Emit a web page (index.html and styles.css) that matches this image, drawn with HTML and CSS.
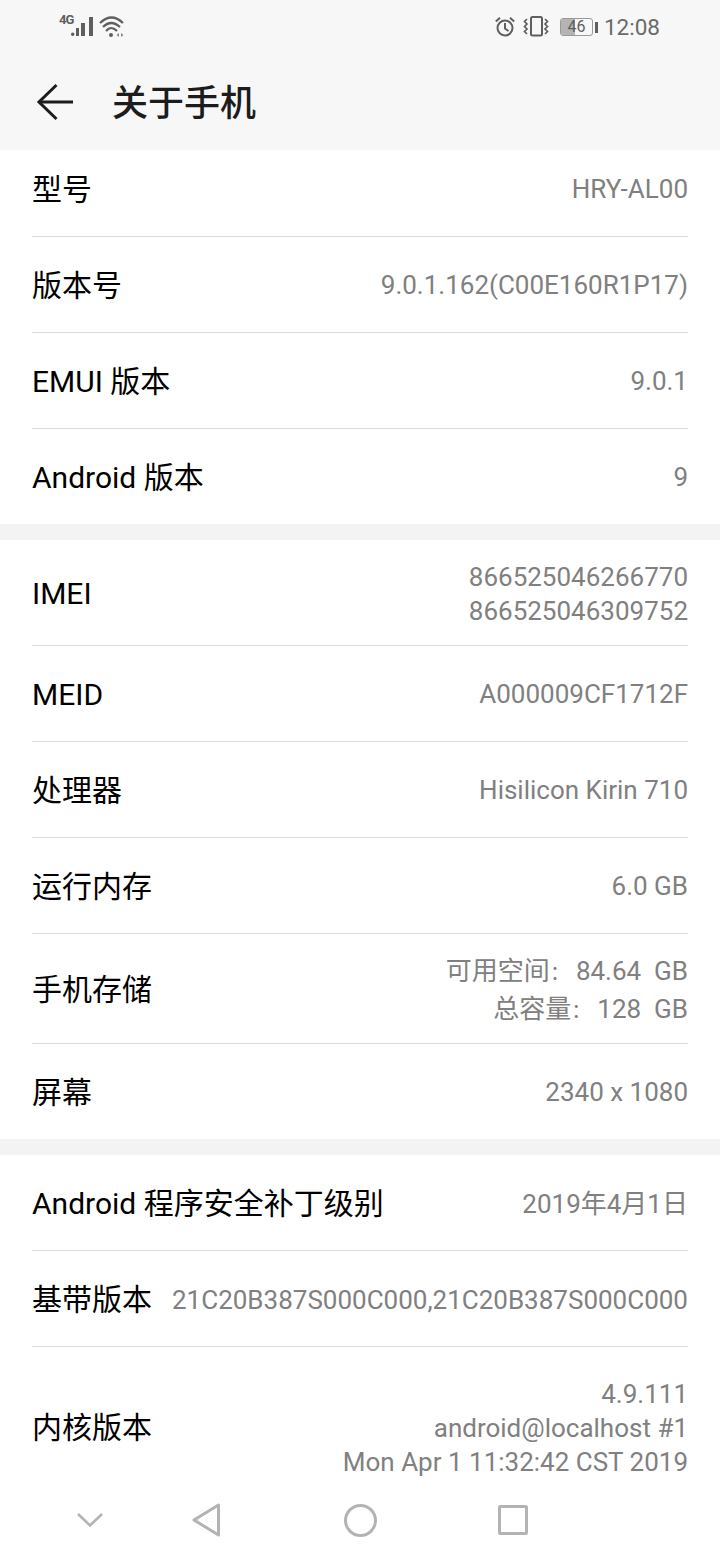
FILE: index.html
```html
<!DOCTYPE html>
<html lang="zh">
<head>
<meta charset="UTF-8">
<title>关于手机</title>
<link rel="stylesheet" href="styles.css">
</head>
<body>
<div class="phone">
  <div class="statusbar">
    <div class="status-left">
      <span class="net">4G</span>
      <svg class="ic-signal" width="22" height="24" viewBox="0 0 22 24" fill="#5f5f5f">
        <circle cx="1.700" cy="19.300" r="1.700"/>
        <rect x="5" y="13" width="3" height="8"/>
        <rect x="10" y="8" width="4" height="13"/>
        <rect x="18" y="2" width="4" height="19"/>
      </svg>
      <svg class="ic-wifi" width="26" height="24" viewBox="0 0 26 24" fill="none" stroke="#5f5f5f" stroke-width="2.200">
        <path d="M1 8Q12.500 -3 24 8"/>
        <path d="M4 12Q12 4 21 12"/>
        <path d="M7 16Q12 10 18 16"/>
        <circle cx="12" cy="20" r="2" fill="#5f5f5f" stroke="none"/>
        <path d="M20 18v4l-2.500 -2zM22 18v4l2.500 -2z" fill="#8a8a8a" stroke="none"/>
      </svg>
    </div>
    <div class="status-right">
      <svg class="ic-alarm" width="20" height="24" viewBox="0 0 20 24" fill="none" stroke="#5f5f5f" stroke-width="2">
        <circle cx="10" cy="13" r="7.500"/>
        <path d="M10 8v5.500l3.500 2.500"/>
        <path d="M0.800 6.500L5 2.800M19.200 6.500L15 2.800"/>
      </svg>
      <svg class="ic-vibrate" width="26" height="24" viewBox="0 0 26 24" fill="none" stroke="#5f5f5f" stroke-width="2">
        <rect x="8" y="2" width="11" height="18.500" rx="1.500"/>
        <path d="M4 4L1.500 6.500 4 9 1.500 11.500 4 14 1.500 16.500 4 19" stroke-width="1.700"/>
        <path d="M22 4l2.500 2.500L22 9l2.500 2.500L22 14l2.500 2.500L22 19" stroke-width="1.700"/>
      </svg>
      <div class="battery">
        <div class="battery-body">
          <div class="battery-level"></div>
          <span class="battery-text">46</span>
        </div>
        <div class="battery-tip"></div>
      </div>
      <span class="clock">12:08</span>
    </div>
  </div>

  <div class="titlebar">
    <svg class="ic-back" width="40" height="38" viewBox="0 0 40 38" fill="none" stroke="#1c1c1c" stroke-width="3">
      <path d="M20.500 2L3 19l17.500 17"/>
      <path d="M3 19h34"/>
    </svg>
    <h1 class="title">关于手机</h1>
  </div>

  <div class="content">
    <div class="section">
      <div class="row row-first"><span class="label">型号</span><span class="value">HRY-AL00</span></div>
      <div class="row"><span class="label">版本号</span><span class="value">9.0.1.162(C00E160R1P17)</span></div>
      <div class="row"><span class="label">EMUI 版本</span><span class="value">9.0.1</span></div>
      <div class="row row-last"><span class="label">Android 版本</span><span class="value">9</span></div>
    </div>
    <div class="section">
      <div class="row row-imei"><span class="label">IMEI</span><span class="value value-low">866525046266770<br>866525046309752</span></div>
      <div class="row"><span class="label">MEID</span><span class="value">A000009CF1712F</span></div>
      <div class="row"><span class="label">处理器</span><span class="value">Hisilicon Kirin 710</span></div>
      <div class="row"><span class="label">运行内存</span><span class="value">6.0 GB</span></div>
      <div class="row row-storage"><span class="label">手机存储</span><span class="value value-low value-storage">可用空间<span class="colon">：</span>84.64&nbsp; GB<br>总容量<span class="colon">：</span>128&nbsp; GB</span></div>
      <div class="row row-last"><span class="label">屏幕</span><span class="value">2340 x 1080</span></div>
    </div>
    <div class="section">
      <div class="row"><span class="label">Android 程序安全补丁级别</span><span class="value value-low">2019年4月1日</span></div>
      <div class="row"><span class="label">基带版本</span><span class="value value-low">21C20B387S000C000,21C20B387S000C000</span></div>
      <div class="row row-kernel"><span class="label">内核版本</span><span class="value value-low">4.9.111<br>android@localhost #1<br>Mon Apr 1 11:32:42 CST 2019</span></div>
    </div>
  </div>

  <div class="navbar">
    <svg class="nav-down" width="26" height="14" viewBox="0 0 26 14" fill="none" stroke="#b3b3b3" stroke-width="2.500">
      <path d="M1 1l12 11.500L25 1"/>
    </svg>
    <svg class="nav-back" width="28" height="34" viewBox="0 0 28 34" fill="none" stroke="#b3b3b3" stroke-width="3" stroke-linejoin="round">
      <path d="M26.500 2v30L2 17z"/>
    </svg>
    <svg class="nav-home" width="33" height="33" viewBox="0 0 33 33" fill="none" stroke="#b3b3b3" stroke-width="3">
      <circle cx="16.500" cy="16.500" r="15"/>
    </svg>
    <svg class="nav-recent" width="30" height="30" viewBox="0 0 30 30" fill="none" stroke="#b3b3b3" stroke-width="3" stroke-linejoin="round">
      <rect x="1.500" y="1.500" width="27" height="27" rx="1"/>
    </svg>
  </div>
</div>
</body>
</html>
```
FILE: styles.css
```css
* {
    box-sizing: border-box;
}
html, body {
    margin: 0;
    padding: 0;
}
body {
    font-family: Roboto, "Noto Sans CJK SC", sans-serif;
    background-color: #fff;
}
.phone {
    width: 720px;
    height: 1560px;
    overflow: hidden;
    display: flex;
    flex-direction: column;
}

/* status bar */
.statusbar {
    height: 54px;
    flex: none;
    background-color: #f7f7f7;
    display: flex;
    justify-content: space-between;
    align-items: center;
    padding: 0 60px 0 59px;
}
.status-left, .status-right {
    display: flex;
    align-items: center;
}
.net {
    font-size: 13px;
    line-height: 14px;
    font-weight: 700;
    color: #5f5f5f;
    width: 12px;
    margin-bottom: 14px;
    letter-spacing: -1px;
}
.ic-wifi {
    margin-left: 6px;
}
.ic-vibrate {
    margin-left: 8px;
}
.battery {
    display: flex;
    align-items: center;
    margin-left: 11px;
}
.battery-body {
    position: relative;
    width: 33px;
    height: 18px;
    border: 1.5px solid #999;
    border-radius: 3px;
    overflow: hidden;
}
.battery-level {
    width: 46%;
    height: 100%;
    background-color: #b4b4b4;
}
.battery-text {
    position: absolute;
    top: 0;
    left: 0;
    right: 0;
    text-align: center;
    font-size: 16px;
    line-height: 15px;
    color: #5f5f5f;
}
.battery-tip {
    width: 3px;
    height: 11px;
    margin-left: 2px;
    background-color: #5f5f5f;
}
.clock {
    font-size: 22.5px;
    color: #6a6a6a;
    margin-left: 6px;
}

/* title */
.titlebar {
    height: 96px;
    flex: none;
    background-color: #f7f7f7;
    display: flex;
    align-items: center;
    padding: 0 0 0 36px;
}
.ic-back {
    flex: none;
}
.title {
    margin: 0 0 0 36px;
    padding-top: 4px;
    font-size: 36px;
    line-height: 48px;
    font-weight: 500;
    color: #1c1c1c;
}

/* list */
.content {
    flex: 1;
    min-height: 0;
    overflow: hidden;
}
.section {
    padding: 0 32px;
    border-bottom: 16px solid #f3f3f3;
}
.section:last-child {
    border-bottom: 0;
}
.row {
    height: 96px;
    display: flex;
    justify-content: space-between;
    align-items: center;
    border-bottom: 1px solid #dcdcdc;
}
.row-first {
    height: 87px;
    padding-bottom: 9px;
}
.row-last {
    height: 95px;
    border-bottom: 0;
}
.row-imei {
    height: 106px;
}
.row-storage {
    height: 110px;
}
.row-kernel {
    height: 160px;
    border-bottom: 0;
}
.label {
    padding-top: 2px;
    font-size: 30px;
    line-height: 40px;
    color: #000;
    white-space: nowrap;
}
.value {
    font-size: 26px;
    line-height: 34px;
    color: #808080;
    text-align: right;
    white-space: nowrap;
}
.value-low {
    padding-top: 2px;
}
.value-storage {
    line-height: 38px;
}
/* smaller box keeps the colon left of centre without touching the number */
.colon {
    font-family: "Noto Sans CJK TC", sans-serif;
    font-size: 20px;
    line-height: 1;
    margin-right: 6px;
}

/* bottom nav */
.navbar {
    height: 80px;
    flex: none;
    background-color: #fff;
    display: flex;
    align-items: center;
    padding-left: 77px;
}
.nav-back {
    margin-left: 89px;
}
.nav-home {
    margin-left: 124px;
}
.nav-recent {
    margin-left: 121px;
}
```
